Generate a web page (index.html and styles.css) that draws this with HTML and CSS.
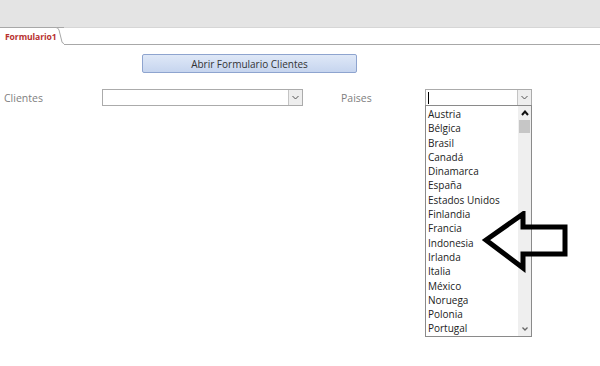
FILE: index.html
```html
<!DOCTYPE html>
<html lang="es">

<head>
    <meta charset="UTF-8" />
    <meta name="viewport" content="width=device-width, initial-scale=1.0" />
    <title>Formulario1</title>
    <link rel="stylesheet" href="styles.css">
</head>

<body>
    <div class="ribbon"></div>

    <div class="tabs">
        <div class="tab">
            <span>Formulario1</span>
            <svg class="tab-edge" width="8" height="17" viewBox="0 0 8 17">
                <path d="M0 0.5 Q2 0.5 3 3 L6 15 Q6.6 16.5 8 16.5" fill="#fff" stroke="#a8a8a8" />
            </svg>
        </div>
        <div class="tab-rest"></div>
    </div>

    <div class="form">
        <div class="btn-row">
            <button class="btn">Abrir Formulario Clientes</button>
        </div>

        <div class="field-row">
            <label class="lbl lbl-clientes">Clientes</label>
            <div class="combo combo-clientes">
                <div class="combo-text"></div>
                <div class="combo-btn">
                    <svg width="7" height="5" viewBox="0 0 7 5"><path d="M0.5 1 L3.5 4 L6.5 1" fill="none" stroke="#555" /></svg>
                </div>
            </div>

            <label class="lbl lbl-paises">Paises</label>
            <div class="combo combo-paises">
                <div class="combo-text"><span class="caret"></span></div>
                <div class="combo-btn">
                    <svg width="7" height="5" viewBox="0 0 7 5"><path d="M0.5 1 L3.5 4 L6.5 1" fill="none" stroke="#555" /></svg>
                </div>

                <!-- lista desplegada -->
                <div class="drop">
                    <ul class="items">
                        <li>Austria</li>
                        <li>Bélgica</li>
                        <li>Brasil</li>
                        <li>Canadá</li>
                        <li>Dinamarca</li>
                        <li>España</li>
                        <li>Estados Unidos</li>
                        <li>Finlandia</li>
                        <li>Francia</li>
                        <li>Indonesia</li>
                        <li>Irlanda</li>
                        <li>Italia</li>
                        <li>México</li>
                        <li>Noruega</li>
                        <li>Polonia</li>
                        <li>Portugal</li>
                    </ul>
                    <div class="scroll">
                        <svg class="arr" width="8" height="6" viewBox="0 0 8 6"><path d="M1 5 L4 1.5 L7 5" fill="none" stroke="#111" stroke-width="2" /></svg>
                        <div class="thumb"></div>
                        <div class="track"></div>
                        <svg class="arr" width="8" height="6" viewBox="0 0 8 6"><path d="M1.5 1.5 L4 4 L6.5 1.5" fill="none" stroke="#666" stroke-width="1.3" /></svg>
                    </div>
                </div>
            </div>
        </div>
    </div>

    <svg class="pointer" width="90" height="64" viewBox="0 0 90 64">
        <polygon points="5,29 42,3 42,16 84,16 84,43 42,43 42,57" fill="none" stroke="#000" stroke-width="5" stroke-linejoin="miter" />
    </svg>
</body>

</html>
```

FILE: styles.css
```css
* {
    margin: 0;
    padding: 0;
    box-sizing: border-box;
}

body {
    width: 600px;
    height: 366px;
    background: #fff;
    font-family: "Open Sans", "Liberation Sans", sans-serif;
    position: relative;
    overflow: hidden;
}

ul {
    list-style: none;
}

.ribbon {
    height: 28px;
    background: #e4e4e4;
    border-bottom: 1px solid #d6d6d6;
}

/* 
    pestaña del formulario
*/
.tabs {
    display: flex;
    height: 17px;
}

.tab {
    display: flex;
    align-items: flex-start;
    border-top: 1px solid #a8a8a8;
    margin-top: -1px;
    background: #fff;
}

.tab span {
    font-size: 8.6px;
    font-weight: bold;
    color: #b8312f;
    padding: 3px 0 0 5px;
    width: 56px;
    letter-spacing: -0.1px;
}

.tab-edge {
    margin-top: -1px;
}

.tab-rest {
    flex: 1;
    border-bottom: 1px solid #a8a8a8;
}

.form {
    padding-top: 9px;
}

.btn-row {
    padding-left: 142px;
}

.btn {
    width: 215px;
    height: 19px;
    border: 1px solid #8ea4cf;
    border-radius: 2px;
    background: linear-gradient(#dfe8f7, #c6d5ef);
    font-family: inherit;
    font-size: 10px;
    color: #333;
    display: block;
}

.field-row {
    display: flex;
    align-items: center;
    margin-top: 16px;
    height: 17px;
}

.lbl {
    font-size: 10.5px;
    color: #808080;
}

.lbl-clientes {
    width: 102px;
    padding-left: 4px;
}

.lbl-paises {
    width: 122px;
    padding-left: 38px;
}

.combo {
    display: flex;
    height: 17px;
    border: 1px solid #ababab;
    position: relative;
    background: #fff;
}

.combo-clientes {
    width: 201px;
}

.combo-paises {
    width: 107px;
}

.combo-text {
    flex: 1;
    display: flex;
    align-items: center;
}

.caret {
    width: 1px;
    height: 12px;
    background: #000;
    margin-left: 2px;
}

.combo-btn {
    width: 14px;
    border-left: 1px solid #c4c4c4;
    background: #eeeeee;
    display: flex;
    align-items: center;
    justify-content: center;
}

/* 
    lista desplegable
*/
.drop {
    position: absolute;
    left: -1px;
    top: 15px;
    width: 107px;
    height: 232px;
    border: 1px solid #8a8a8a;
    background: #fff;
    display: flex;
    z-index: 2;
}

.items {
    flex: 1;
    padding-top: 1px;
}

.items li {
    font-size: 10px;
    line-height: 14.3px;
    color: #222;
    padding-left: 2px;
    white-space: nowrap;
}

.scroll {
    width: 13px;
    background: #efefef;
    display: flex;
    flex-direction: column;
    align-items: center;
}

.arr {
    margin: 4px 0;
}

.thumb {
    width: 11px;
    height: 13px;
    background: #c6c6c6;
}

.track {
    flex: 1;
}

.pointer {
    position: absolute;
    left: 481px;
    top: 211px;
    z-index: 3;
}
```
